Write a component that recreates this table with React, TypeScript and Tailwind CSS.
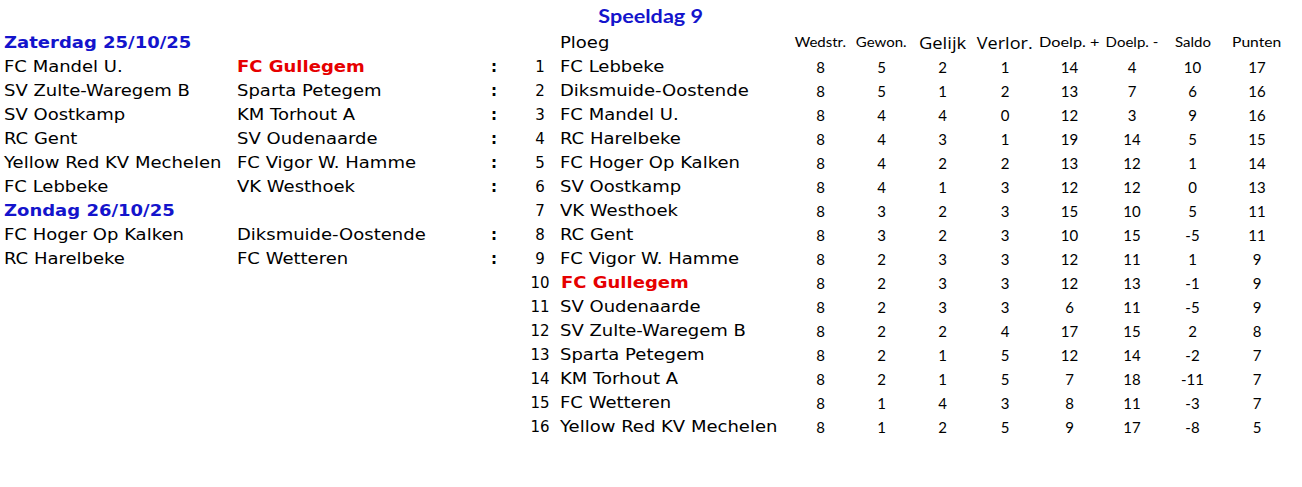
const verdana = "[font-family:'DejaVu_Sans',Verdana,sans-serif]";
const calibri = "[font-family:Lato,'Open_Sans',sans-serif]";

type Match = [string, string, boolean?];
type Team = [string, number, number, number, number, number, number, number, number];

// left block: one entry per row (after the header row)
const left: (Match | string | null)[] = [
  ['FC Mandel U.', 'FC Gullegem', true],
  ['SV Zulte-Waregem B', 'Sparta Petegem'],
  ['SV Oostkamp', 'KM Torhout A'],
  ['RC Gent', 'SV Oudenaarde'],
  ['Yellow Red KV Mechelen', 'FC Vigor W. Hamme'],
  ['FC Lebbeke', 'VK Westhoek'],
  'Zondag 26/10/25',
  ['FC Hoger Op Kalken', 'Diksmuide-Oostende'],
  ['RC Harelbeke', 'FC Wetteren'],
  null, null, null, null, null, null, null,
];

const standings: Team[] = [
  ['FC Lebbeke', 8, 5, 2, 1, 14, 4, 10, 17],
  ['Diksmuide-Oostende', 8, 5, 1, 2, 13, 7, 6, 16],
  ['FC Mandel U.', 8, 4, 4, 0, 12, 3, 9, 16],
  ['RC Harelbeke', 8, 4, 3, 1, 19, 14, 5, 15],
  ['FC Hoger Op Kalken', 8, 4, 2, 2, 13, 12, 1, 14],
  ['SV Oostkamp', 8, 4, 1, 3, 12, 12, 0, 13],
  ['VK Westhoek', 8, 3, 2, 3, 15, 10, 5, 11],
  ['RC Gent', 8, 3, 2, 3, 10, 15, -5, 11],
  ['FC Vigor W. Hamme', 8, 2, 3, 3, 12, 11, 1, 9],
  ['FC Gullegem', 8, 2, 3, 3, 12, 13, -1, 9],
  ['SV Oudenaarde', 8, 2, 3, 3, 6, 11, -5, 9],
  ['SV Zulte-Waregem B', 8, 2, 2, 4, 17, 15, 2, 8],
  ['Sparta Petegem', 8, 2, 1, 5, 12, 14, -2, 7],
  ['KM Torhout A', 8, 2, 1, 5, 7, 18, -11, 7],
  ['FC Wetteren', 8, 1, 4, 3, 8, 11, -3, 7],
  ['Yellow Red KV Mechelen', 8, 1, 2, 5, 9, 17, -8, 5],
];

const grid =
  'grid grid-cols-[233px_251px_20px_52px_234px_61px_61px_61px_64px_65px_60px_61px_68px] h-[24px] items-center';

const statCols = ['w', 'g', 'gl', 'v', 'dp', 'dm', 's', 'p'];

function Wide({ children, className = '' }: { children: React.ReactNode; className?: string }) {
  return <span className={`inline-block origin-left scale-x-[1.2] whitespace-nowrap ${className}`}>{children}</span>;
}

const txt = `text-[15px] whitespace-nowrap ${verdana}`;
const boldRed = `text-[15px] font-bold text-[#e60000] whitespace-nowrap ${verdana}`;
const dateCls = `pl-[4px] text-[15px] font-bold text-[#1414cc] whitespace-nowrap ${verdana}`;
const head = `flex justify-center whitespace-nowrap font-normal ${calibri}`;
const headBig = "flex justify-center whitespace-nowrap font-normal [font-family:'Open_Sans',Lato,sans-serif]";

export default function App() {
  return (
    <div className="w-[1302px] h-[487px] bg-white text-black overflow-hidden">
      <div className={`h-[31px] flex items-center justify-center pt-[1px] text-[18px] font-bold text-[#1414cc] ${calibri}`}>
        <span className="inline-block scale-x-[1.2]">Speeldag 9</span>
      </div>

      {/* header row */}
      <div className={grid}>
        <div className={dateCls}>
          <Wide>Zaterdag 25/10/25</Wide>
        </div>
        <div />
        <div />
        <div />
        <div className={`pl-[4px] ${txt}`}>
          <Wide>Ploeg</Wide>
        </div>
        <div className={`${head} text-[12.5px]`}>
          <span className="inline-block scale-x-[1.2]">Wedstr.</span>
        </div>
        <div className={`${head} text-[12.5px]`}>
          <span className="inline-block scale-x-[1.2]">Gewon.</span>
        </div>
        <div className={`${headBig} text-[16px]`}>
          <span className="inline-block scale-x-[1.15]">Gelijk</span>
        </div>
        <div className={`${headBig} text-[16px]`}>
          <span className="inline-block scale-x-[1.13]">Verlor.</span>
        </div>
        <div className={`${head} text-[12.5px]`}>
          <span className="inline-block scale-x-[1.3]">Doelp. +</span>
        </div>
        <div className={`${head} text-[12.5px]`}>
          <span className="inline-block scale-x-[1.2]">Doelp. -</span>
        </div>
        <div className={`${head} text-[12.5px]`}>
          <span className="inline-block scale-x-[1.2]">Saldo</span>
        </div>
        <div className={`${head} text-[12.5px]`}>
          <span className="inline-block scale-x-[1.25]">Punten</span>
        </div>
      </div>

      {standings.map((t, i) => {
        const l = left[i];
        const own = t[0] === 'FC Gullegem';
        return (
          <div key={i} className={grid}>
            {typeof l === 'string' ? (
              <>
                <div className={dateCls}>
                  <Wide>{l}</Wide>
                </div>
                <div />
                <div />
              </>
            ) : l ? (
              <>
                <div className={`pl-[4px] ${txt}`}>
                  <Wide>{l[0]}</Wide>
                </div>
                <div className={`pl-[4px] ${l[2] ? boldRed : txt}`}>
                  <Wide>{l[1]}</Wide>
                </div>
                <div className={`text-center text-[15px] font-bold ${verdana}`}>:</div>
              </>
            ) : (
              <>
                <div />
                <div />
                <div />
              </>
            )}
            <div className={`pl-[20px] text-center text-[15px] ${verdana}`}>{i + 1}</div>
            <div className={own ? `pl-[5px] ${boldRed}` : `pl-[4px] ${txt}`}>
              <Wide>{t[0]}</Wide>
            </div>
            {t.slice(1).map((n, j) => (
              <div key={statCols[j]} className={`text-center text-[15px] ${calibri}`}>
                {n}
              </div>
            ))}
          </div>
        );
      })}
    </div>
  );
}
